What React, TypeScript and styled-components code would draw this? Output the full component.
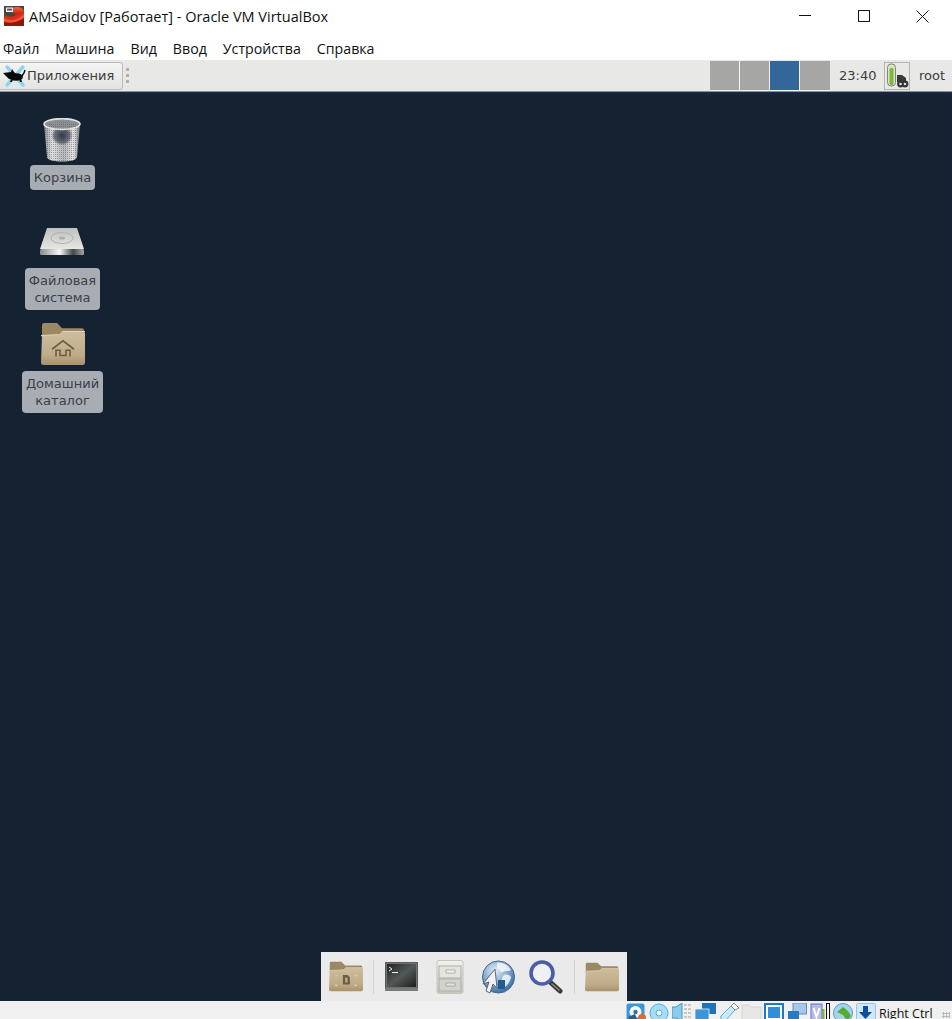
import React from 'react'
import styled, { createGlobalStyle } from 'styled-components'

const Global = createGlobalStyle`
  html, body { margin: 0; padding: 0; background: #fff; }
  #root { width: 952px; height: 1019px; overflow: hidden; }
`

const Window = styled.div`
  width: 952px;
  height: 1019px;
  display: flex;
  flex-direction: column;
  overflow: hidden;
  background: #fff;
`

const TitleBar = styled.div`
  height: 32px;
  flex: none;
  display: flex;
  align-items: center;
  padding-left: 4px;
`

const TitleText = styled.div`
  margin-left: 5px;
  font: 14.5px "Open Sans", "Noto Sans", sans-serif;
  color: #111;
  white-space: nowrap;
  flex: 1;
`

const WinButton = styled.div`
  width: 59px;
  height: 32px;
  display: flex;
  align-items: center;
  justify-content: center;
`

const MenuBar = styled.div`
  height: 28px;
  flex: none;
  display: flex;
  gap: 16px;
  align-items: center;
  padding: 5px 0 0 3px;
  box-sizing: border-box;
  font: 14.2px "Open Sans", "Noto Sans", sans-serif;
  color: #111;
`

const Panel = styled.div`
  height: 32px;
  flex: none;
  box-sizing: border-box;
  display: flex;
  align-items: center;
  background: #e8e8e7;
  border-bottom: 1px solid #8d9094;
  font: 13px "DejaVu Sans", sans-serif;
  color: #3c3c3c;
`

const AppsButton = styled.div`
  width: 123px;
  height: 28px;
  box-sizing: border-box;
  display: flex;
  align-items: center;
  gap: 1px;
  padding-left: 2px;
  border: 1px solid #bcbcbc;
  border-left: none;
  border-radius: 0 3px 3px 0;
  background: linear-gradient(#f3f3f3, #e4e4e4);
`

const Grip = styled.div`
  width: 3px;
  height: 16px;
  margin-left: 3px;
  background: repeating-linear-gradient(#b0b0b0 0 3px, transparent 3px 6px);
`

const Spacer = styled.div`
  flex: 1;
`

const Pager = styled.div`
  width: 120px;
  display: flex;
  gap: 1px;
  height: 30px;
  background: #f4f4f4;
  padding-bottom: 1px;
  box-sizing: border-box;
  align-self: flex-start;
  margin-top: 1px;
`

const Workspace = styled.div<{ $active?: boolean }>`
  width: 29px;
  background: ${p => (p.$active ? '#336699' : '#a6a6a4')};
  &:last-child {
    width: 30px;
  }
`

const Clock = styled.div`
  margin-left: 9px;
  width: 36px;
  white-space: nowrap;
`

const BatteryBox = styled.div`
  width: 26px;
  height: 28px;
  margin-left: 9px;
  box-sizing: border-box;
  border: 1px solid #b4b4b4;
  display: flex;
  align-items: center;
  justify-content: center;
`

const UserName = styled.div`
  margin-left: 9px;
  width: 33px;
`

const Desktop = styled.div`
  flex: 1;
  min-height: 0;
  background: #152232;
  display: flex;
  flex-direction: column;
  box-shadow: inset 0 4px 3px -2px #1b2a3c;
`

const IconColumn = styled.div`
  width: 125px;
  flex: 1;
  display: flex;
  flex-direction: column;
  align-items: center;
  padding-top: 26px;
`

const DesktopItem = styled.div<{ $height: number; $gap: number; $top?: number }>`
  height: ${p => p.$height}px;
  box-sizing: border-box;
  padding-top: ${p => p.$top ?? 0}px;
  display: flex;
  flex-direction: column;
  align-items: center;
  gap: ${p => p.$gap}px;
`

const ItemLabel = styled.div`
  padding: 4px;
  border-radius: 4px;
  background: #a8acb3;
  color: #3a404a;
  font: 13px/17px "DejaVu Sans", sans-serif;
  text-align: center;
`

const Dock = styled.div`
  align-self: flex-start;
  margin-left: 321px;
  width: 306px;
  height: 49px;
  flex: none;
  display: flex;
  align-items: center;
  background: #eaeaea;
`

const DockSlot = styled.div<{ $left: number }>`
  margin-left: ${p => p.$left}px;
  display: flex;
  filter: blur(0.4px);
`

const DockSeparator = styled.div<{ $left: number }>`
  width: 1px;
  height: 34px;
  margin-left: ${p => p.$left}px;
  background: #d4d4d4;
`

const StatusBar = styled.div`
  height: 18px;
  flex: none;
  display: flex;
  align-items: flex-start;
  background: #f0f0f0;
  padding-left: 626px;
  overflow: hidden;
`

const StatusIcon = styled.div<{ $width?: number }>`
  width: ${p => p.$width ?? 23}px;
  height: 18px;
  flex: none;
  padding-top: 2px;
  box-sizing: border-box;
`

const CaptureMark = styled.div`
  width: 4px;
  height: 18px;
  flex: none;
  margin: 2px 3px 0 0;
  box-sizing: border-box;
  border: 1px solid #111;
  background: #f6f6f6;
`

const HostKey = styled.div`
  padding-top: 4px;
  font: 12.5px "Open Sans", "Noto Sans", sans-serif;
  color: #111;
  white-space: nowrap;
`

const SizeGrip = styled.div`
  width: 8px;
  height: 6px;
  margin: 11px 0 0 9px;
  flex: none;
  background: radial-gradient(circle, #b8b8b8 1px, transparent 1.2px) 0 0 / 3px 3px;
`

const Stop = ({ o, c }: { o: number; c: string }) => <stop offset={o} stopColor={c} />

const VBoxIcon = () => (
  <svg width="20" height="20" viewBox="0 0 20 20">
    <defs>
      <linearGradient id="vb" x1="0" y1="0" x2="0" y2="1">
        <Stop o={0} c="#f8634a" />
        <Stop o={1} c="#c5200e" />
      </linearGradient>
    </defs>
    <rect width="20" height="20" fill="#4a4442" />
    <path d="M0 9c5 3 11 2 15-3l5-1v13H0z" fill="#d92e18" />
    <path d="M0 12c6 4 14 2 20-4v5c-6 5-14 6-20 2z" fill="#f0553c" />
    <path d="M0 16c6 2 14 0 20-4v8H0z" fill="#8a1a0c" />
    <ellipse cx="13" cy="4.5" rx="6.5" ry="3.5" fill="url(#vb)" />
    <rect x="2" y="1.5" width="7" height="4.5" fill="#fff" />
    <rect x="3" y="2.6" width="5" height="2" fill="#555" />
  </svg>
)

const MouseIcon = () => (
  <svg width="24" height="24" viewBox="0 0 24 24">
    <g stroke="#8fd4ee" strokeWidth="3.4" strokeLinecap="round">
      <path d="M5 3l16 18" />
      <path d="M21 3L5 21" />
    </g>
    <ellipse cx="14" cy="13" rx="7" ry="3.8" fill="#0a0a0a" />
    <path d="M1 9l8-1 1-3 2 3 2 2v5H7z" fill="#0a0a0a" />
    <path d="M20 12l2-3 1-3" fill="none" stroke="#0a0a0a" strokeWidth="1.4" />
    <path d="M9 15l-1 3h2l1-3zM17 15l1 3h2l-1-4z" fill="#0a0a0a" />
  </svg>
)

const BatteryIcon = () => (
  <svg width="24" height="26" viewBox="0 0 24 26">
    <rect x="2.5" y="1" width="8" height="22" rx="3.5" fill="#d8e4c8" stroke="#7f8a72" />
    <rect x="4.5" y="5" width="4" height="17" rx="1.5" fill="#7cb83c" />
    <path d="M12 12h5l4 3v4H12z" fill="#3a3a3a" />
    <circle cx="15.5" cy="21" r="3.4" fill="#333" />
    <circle cx="20" cy="21" r="3.4" fill="#333" />
    <circle cx="15.5" cy="21" r="1.3" fill="#ddd" />
    <circle cx="20" cy="21" r="1.3" fill="#ddd" />
  </svg>
)

const TrashIcon = () => (
  <svg width="38" height="44" viewBox="0 0 38 44">
    <defs>
      <linearGradient id="tr" x1="0" y1="0" x2="1" y2="0">
        <Stop o={0} c="#85878a" />
        <Stop o={0.22} c="#e2e2e2" />
        <Stop o={0.55} c="#b5b7b9" />
        <Stop o={0.82} c="#e4e4e4" />
        <Stop o={1} c="#7e8083" />
      </linearGradient>
      <radialGradient id="trd" cx=".5" cy=".35" r=".42">
        <Stop o={0} c="#2e3648" />
        <Stop o={0.7} c="#3a4254aa" />
        <Stop o={1} c="#3a425400" />
      </radialGradient>
      <pattern id="trm" width="2" height="2" patternUnits="userSpaceOnUse">
        <rect width="1" height="1" fill="#4a4c50" opacity=".45" />
      </pattern>
    </defs>
    <path d="M1 6l3 33c0 3 7 4.500 15 4.500s15-1.500 15-4.500l3-33z" fill="url(#tr)" />
    <path d="M6 9h26l-2 24H8z" fill="url(#trd)" />
    <path d="M1 6l3 33c0 3 7 4.500 15 4.500s15-1.500 15-4.500l3-33z" fill="url(#trm)" />
    <ellipse cx="19" cy="6" rx="18" ry="5.400" fill="#8c9093" stroke="#e2e2e2" strokeWidth="1.6" />
    <ellipse cx="19" cy="7.400" rx="15" ry="3.200" fill="url(#trm)" />
  </svg>
)

const DriveIcon = () => (
  <svg width="44" height="27" viewBox="0 0 44 27">
    <defs>
      <linearGradient id="dr" x1="0" y1="0" x2="0" y2="1">
        <Stop o={0} c="#bfc1bf" />
        <Stop o={1} c="#e6e7e5" />
      </linearGradient>
      <linearGradient id="df" x1="0" y1="0" x2="1" y2="0">
        <Stop o={0} c="#8b8d8c" />
        <Stop o={0.45} c="#f6f6f6" />
        <Stop o={0.75} c="#45474a" />
        <Stop o={1} c="#a5a7a7" />
      </linearGradient>
    </defs>
    <path d="M7 0h30l7 21H0z" fill="url(#dr)" />
    <ellipse cx="22" cy="10" rx="11" ry="5.500" fill="none" stroke="#b2b4b2" />
    <ellipse cx="22" cy="10" rx="3" ry="1.500" fill="#adafad" />
    <rect y="21" width="44" height="6" rx="1.500" fill="url(#df)" />
  </svg>
)

const FolderShape = ({ id, width, height, children }: { id: string; width: number; height: number; children?: React.ReactNode }) => (
  <svg width={width} height={height} viewBox="0 0 44 42" preserveAspectRatio="none">
    <defs>
      <linearGradient id={id} x1="0" y1="0" x2="0" y2="1">
        <Stop o={0} c="#cdbd9f" />
        <Stop o={0.7} c="#bfab88" />
        <Stop o={1} c="#a8926c" />
      </linearGradient>
    </defs>
    <path d="M1 3q0-2 2-2h13l5 5h20q2 0 2 2v8H1z" fill="#9c8862" />
    <path d="M1 13l18-1 3-3h20q2 0 2 2v28q0 2-2 2H2q-2 0-2-2z" fill={`url(#${id})`} />
    <path d="M0 13l19-1 3-3h22" fill="none" stroke="#ded0b4" />
    {children}
  </svg>
)

const HomeFolderIcon = () => (
  <FolderShape id="fh" width={44} height={44}>
    <g fill="none" stroke="#6d5d42" strokeWidth="1.6">
      <path d="M11 26l11-8 11 8" />
      <path d="M15 33v-6h4v5h6v-5h4v6" />
    </g>
  </FolderShape>
)

const DocFolderIcon = () => (
  <FolderShape id="fd" width={34} height={31}>
    <path d="M18 19h6l3 3v10h-9zm3 3v7h3v-6z" fill="#6d5d42" />
    <path d="M8 20h3M33 20h3M8 33h3M33 33h3" stroke="#e2d6bc" strokeWidth="1.500" />
  </FolderShape>
)

const PlainFolderIcon = () => <FolderShape id="fp" width={34} height={30} />

const TerminalIcon = () => (
  <svg width="33" height="30" viewBox="0 0 33 30">
    <defs>
      <linearGradient id="ts" x1="0" y1="0" x2="1" y2="1">
        <Stop o={0} c="#1f2323" />
        <Stop o={0.5} c="#525858" />
        <Stop o={1} c="#1c1e1e" />
      </linearGradient>
    </defs>
    <rect x="0.500" y="0.500" width="32" height="27" fill="#707070" stroke="#5b5b5b" />
    <rect x="2" y="2" width="29" height="23" fill="url(#ts)" />
    <rect y="26" width="33" height="3" fill="#7a7a7a" />
    <path d="M4 5l3 2-3 2" fill="none" stroke="#eee" />
    <rect x="7" y="10" width="6" height="1" fill="#eee" />
  </svg>
)

const CabinetIcon = () => (
  <svg width="28" height="34" viewBox="0 0 28 34">
    <defs>
      <linearGradient id="cb" x1="0" y1="0" x2="0" y2="1">
        <Stop o={0} c="#f2f2ee" />
        <Stop o={1} c="#c4c6be" />
      </linearGradient>
    </defs>
    <rect x="1" y="0.500" width="26" height="33" rx="2" fill="url(#cb)" stroke="#c4c5bf" />
    <rect x="3" y="6" width="22" height="12" fill="#e4e4e0" stroke="#aeafa9" />
    <rect x="3" y="19" width="22" height="12" fill="#d2d3cd" stroke="#aeafa9" />
    <rect x="10" y="10" width="9" height="3" fill="#f2f2f0" stroke="#8d8e88" strokeWidth=".6" />
    <rect x="10" y="23" width="9" height="3" fill="#e4e4e0" stroke="#8d8e88" strokeWidth=".6" />
  </svg>
)

const GlobeIcon = () => (
  <svg width="34" height="34" viewBox="0 0 34 34">
    <defs>
      <radialGradient id="gl" cx=".4" cy=".3" r=".8">
        <Stop o={0} c="#e3edf6" />
        <Stop o={0.55} c="#7aa2c8" />
        <Stop o={1} c="#2c5d90" />
      </radialGradient>
    </defs>
    <circle cx="17.500" cy="17" r="16" fill="url(#gl)" stroke="#3a6796" />
    <path d="M16 3c6-1 11 2 14 7-3 2-6 0-8 2-3 1-3-3-6-3zM23 15c3-1 6 0 7 2-1 5-4 9-8 11-1-4-3-9 1-13z" fill="#f4f7fb" opacity=".85" />
    <rect x="17" y="20" width="7" height="9" fill="#205a92" />
    <path d="M14 9l2 19-4-4-3 9-4-2 3-9-6 2z" fill="#f2f2f2" stroke="#5e6a75" />
  </svg>
)

const SearchIcon = () => (
  <svg width="34" height="34" viewBox="0 0 34 34">
    <path d="M20 21l11 10" stroke="#3b3b36" strokeWidth="5" strokeLinecap="round" />
    <path d="M23 24l7 6" stroke="#8b8a78" strokeWidth="1.500" strokeLinecap="round" />
    <circle cx="13" cy="13" r="11" fill="#eef0f6" stroke="#4a5ea8" strokeWidth="3.600" />
  </svg>
)

const HddStatus = () => (
  <svg width="21" height="18" viewBox="0 0 21 18">
    <rect x="0.500" y="0.500" width="18" height="18" rx="2" fill="#3e96d8" />
    <circle cx="9.500" cy="9" r="6" fill="#f2f7fb" />
    <circle cx="9.500" cy="9" r="2.200" fill="#3e6f98" />
    <path d="M2 14l7-3 3 7H4z" fill="#245f90" />
    <circle cx="16" cy="15" r="4" fill="#e8662a" />
  </svg>
)

const DiscStatus = () => (
  <svg width="21" height="18" viewBox="0 0 21 18">
    <circle cx="10" cy="10" r="9" fill="#a7dcf5" stroke="#56aee0" />
    <circle cx="10" cy="10" r="3" fill="#f4fbff" stroke="#56aee0" />
  </svg>
)

const AudioStatus = () => (
  <svg width="21" height="18" viewBox="0 0 21 18">
    <path d="M0 4h4l6-4v18l-6-3H0z" fill="#8ccbed" stroke="#3f97d0" />
    <g fill="#c9c9c0">
      <rect x="12" y="1" width="3" height="2" /><rect x="16" y="1" width="3" height="2" />
      <rect x="12" y="5" width="3" height="2" /><rect x="16" y="5" width="3" height="2" />
      <rect x="12" y="9" width="3" height="2" /><rect x="16" y="9" width="3" height="2" />
      <rect x="12" y="13" width="3" height="2" /><rect x="16" y="13" width="3" height="2" />
    </g>
  </svg>
)

const NetStatus = () => (
  <svg width="21" height="18" viewBox="0 0 21 18">
    <rect x="7" y="0" width="14" height="11" fill="#1f73b8" />
    <rect x="0" y="6" width="14" height="12" fill="#3b97da" stroke="#e8f2fa" strokeWidth=".8" />
  </svg>
)

const UsbStatus = () => (
  <svg width="21" height="18" viewBox="0 0 21 18">
    <path d="M3 13L13 3l4 4L8 17q-2 2-4 0t-1-4z" fill="#c9e8f8" stroke="#56aee0" />
    <path d="M13 3l3-3 5 5-4 2z" fill="#f8f8f8" stroke="#8b8b8b" />
  </svg>
)

const SharedStatus = () => (
  <svg width="21" height="18" viewBox="0 0 21 18">
    <path d="M1 18V2h7l2 2h10v14z" fill="#e6e6e4" stroke="#d4d4d0" />
  </svg>
)

const ScreenStatus = () => (
  <svg width="20" height="18" viewBox="0 0 20 18">
    <rect x="1" y="1" width="18" height="17" fill="#fff" stroke="#1c7ac4" strokeWidth="2" />
    <rect x="4" y="4" width="12" height="11" fill="#2f8fd8" />
  </svg>
)

const DisplaysStatus = () => (
  <svg width="20" height="18" viewBox="0 0 20 18">
    <rect x="6" y="0" width="13.500" height="11" fill="#a8c8ea" stroke="#5a8fc8" />
    <rect x="1" y="8" width="11" height="10" fill="#2879c0" />
  </svg>
)

const VtxStatus = () => (
  <svg width="15" height="18" viewBox="0 0 15 18">
    <rect x="1" y="1" width="11" height="17" fill="#b7bde8" stroke="#6672c0" />
    <path d="M3.500 5l3 9 3-9" fill="none" stroke="#fff" strokeWidth="2" />
    <rect x="12" y="6" width="2.500" height="12" fill="#7db248" />
  </svg>
)

const GlobeStatus = () => (
  <svg width="21" height="18" viewBox="0 0 21 18">
    <circle cx="10" cy="10" r="9.500" fill="#a7d3ec" stroke="#4d9bcc" />
    <path d="M4 9l6-5 5 4 3 5-4 5-4-6z" fill="#53ad2f" />
  </svg>
)

const ArrowStatus = () => (
  <svg width="20" height="18" viewBox="0 0 20 18">
    <rect x="0.500" y="0.500" width="19" height="18" rx="1" fill="#cfe7f8" stroke="#91c4e8" />
    <path d="M7 3h5v6h4l-6.500 7L3 9h4z" fill="#0f4f98" />
  </svg>
)

const menus = ['Файл', 'Машина', 'Вид', 'Ввод', 'Устройства', 'Справка']

export default function App() {
  return (
    <>
      <Global />
      <Window>
        <TitleBar>
          <VBoxIcon />
          <TitleText>AMSaidov [Работает] - Oracle VM VirtualBox</TitleText>
          <WinButton>
            <svg width="12" height="12" viewBox="0 0 12 12">
              <path d="M0 5.500h12" stroke="#111" />
            </svg>
          </WinButton>
          <WinButton>
            <svg width="12" height="12" viewBox="0 0 12 12">
              <rect x="0.500" y="0.500" width="11" height="11" fill="none" stroke="#111" />
            </svg>
          </WinButton>
          <WinButton>
            <svg width="13" height="13" viewBox="0 0 13 13">
              <path d="M0.500 0.500l12 12M12.500 0.500l-12 12" stroke="#111" />
            </svg>
          </WinButton>
        </TitleBar>
        <MenuBar>
          {menus.map(m => (
            <span key={m}>{m}</span>
          ))}
        </MenuBar>
        <Panel>
          <AppsButton>
            <MouseIcon />
            Приложения
          </AppsButton>
          <Grip />
          <Spacer />
          <Pager>
            <Workspace />
            <Workspace />
            <Workspace $active />
            <Workspace />
          </Pager>
          <Clock>23:40</Clock>
          <BatteryBox>
            <BatteryIcon />
          </BatteryBox>
          <UserName>root</UserName>
        </Panel>
        <Desktop>
          <IconColumn>
            <DesktopItem $height={104} $gap={3}>
              <TrashIcon />
              <ItemLabel>Корзина</ItemLabel>
            </DesktopItem>
            <DesktopItem $height={100} $gap={13} $top={6}>
              <DriveIcon />
              <ItemLabel>
                Файловая
                <br />
                система
              </ItemLabel>
            </DesktopItem>
            <DesktopItem $height={94} $gap={5}>
              <HomeFolderIcon />
              <ItemLabel>
                Домашний
                <br />
                каталог
              </ItemLabel>
            </DesktopItem>
          </IconColumn>
          <Dock>
            <DockSlot $left={8}>
              <DocFolderIcon />
            </DockSlot>
            <DockSeparator $left={10} />
            <DockSlot $left={11}>
              <TerminalIcon />
            </DockSlot>
            <DockSlot $left={18}>
              <CabinetIcon />
            </DockSlot>
            <DockSlot $left={17}>
              <GlobeIcon />
            </DockSlot>
            <DockSlot $left={14}>
              <SearchIcon />
            </DockSlot>
            <DockSeparator $left={11} />
            <DockSlot $left={10}>
              <PlainFolderIcon />
            </DockSlot>
          </Dock>
        </Desktop>
        <StatusBar>
          <StatusIcon><HddStatus /></StatusIcon>
          <StatusIcon><DiscStatus /></StatusIcon>
          <StatusIcon><AudioStatus /></StatusIcon>
          <StatusIcon><NetStatus /></StatusIcon>
          <StatusIcon><UsbStatus /></StatusIcon>
          <StatusIcon><SharedStatus /></StatusIcon>
          <StatusIcon><ScreenStatus /></StatusIcon>
          <StatusIcon><DisplaysStatus /></StatusIcon>
          <StatusIcon $width={16}><VtxStatus /></StatusIcon>
          <CaptureMark />
          <StatusIcon><GlobeStatus /></StatusIcon>
          <StatusIcon><ArrowStatus /></StatusIcon>
          <HostKey>Right Ctrl</HostKey>
          <SizeGrip />
        </StatusBar>
      </Window>
    </>
  )
}
